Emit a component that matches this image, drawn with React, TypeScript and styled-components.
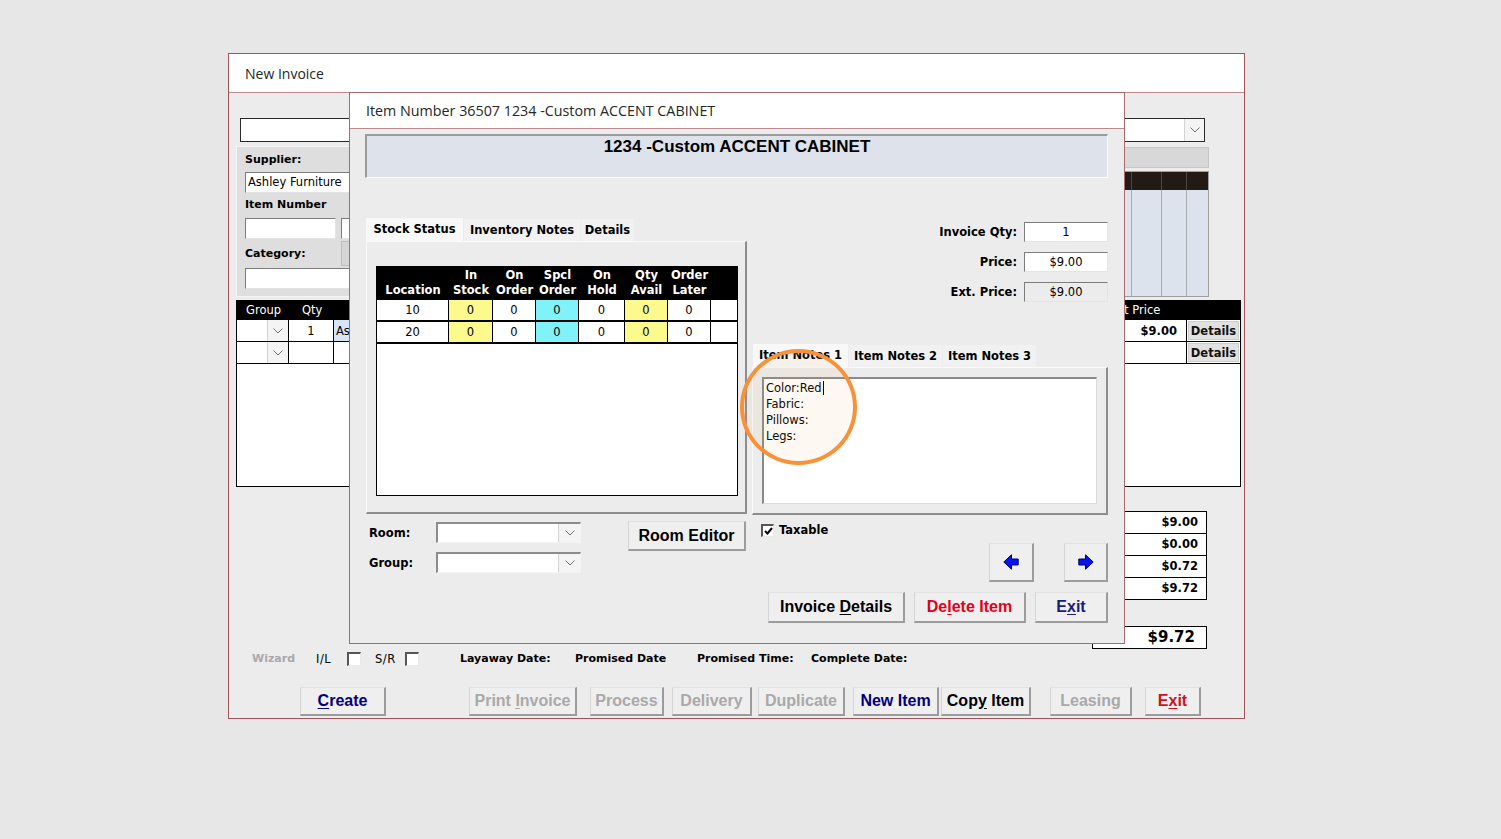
import React from "react";
import styled, { createGlobalStyle } from "styled-components";

const UI = `"DejaVu Sans", Verdana, sans-serif`;
const BTN = `"Liberation Sans", Arial, sans-serif`;
const TITLE = `"Open Sans", "Noto Sans", sans-serif`;

const GlobalStyle = createGlobalStyle`
  * { box-sizing: border-box; }
  html, body { margin: 0; padding: 0; background: #e8e7e7; }
  body { font-family: ${UI}; color: #000; }
`;

const Page = styled.div`
  width: 1501px;
  height: 839px;
  padding: 53px 0 0 228px;
  overflow: hidden;
`;

const MainWindow = styled.div`
  position: relative;
  width: 1017px;
  height: 666px;
  border: 1px solid #a0545a;
  background: #ececec;
  display: flex;
  flex-direction: column;
`;

const WinTitle = styled.div<{ $h: number; $size?: number }>`
  flex: none;
  height: ${(p) => p.$h}px;
  background: #fff;
  border-bottom: 1px solid #b98a8e;
  padding: 0 0 0 16px;
  display: flex;
  align-items: center;
  font: ${(p) => p.$size ?? 14}px ${TITLE};
  color: #262626;
`;

const MainBody = styled.div`
  flex: 1;
  padding: 0 3px 0 7px;
  display: flex;
  flex-direction: column;
`;

const TopRow = styled.div`
  margin-top: 25px;
  display: flex;
  justify-content: space-between;
`;

const LeftCol = styled.div`
  width: 260px;
`;

const RightCol = styled.div`
  width: 200px;
  padding-right: 32px;
  display: flex;
  flex-direction: column;
  align-items: flex-end;
`;

const Label = styled.div<{ $size?: number; $w?: number; $color?: string }>`
  font: bold ${(p) => p.$size ?? 11}px/14px ${UI};
  color: ${(p) => p.$color ?? "#000"};
  white-space: nowrap;
  ${(p) => (p.$w ? `width: ${p.$w}px; flex: none;` : "")}
`;

const Combo = styled.div<{ $w: number; $h?: number; $dark?: boolean }>`
  position: relative;
  width: ${(p) => p.$w}px;
  height: ${(p) => p.$h ?? 21}px;
  background: #fff;
  border-style: solid;
  border-width: ${(p) => (p.$dark ? "1px" : "2px 1px 1px 2px")};
  border-color: ${(p) => (p.$dark ? "#2a2a2a" : "#8c8c8c #f4f4f4 #f4f4f4 #8c8c8c")};
  display: flex;
  justify-content: flex-end;
`;

const DropBtn = styled.div<{ $w?: number }>`
  width: ${(p) => p.$w ?? 21}px;
  height: 100%;
  background: #f4f4f4;
  border-left: 1px solid #d2d2d2;
  display: flex;
  align-items: center;
  justify-content: center;
`;

const Chevron = () => (
  <svg width="10" height="6" viewBox="0 0 10 6">
    <path d="M0.5 0.5 L5 5 L9.5 0.5" fill="none" stroke="#707070" strokeWidth="1" />
  </svg>
);

const SearchPanel = styled.div`
  margin-top: 4px;
  width: 250px;
  height: 151px;
  background: #dedede;
  border: 1px solid #f6f6f6;
  border-right: none;
  padding: 6px 0 0 8px;
`;

const TextBox = styled.div<{ $w: number; $h?: number; $bg?: string; $align?: string; $mt?: number }>`
  flex: none;
  width: ${(p) => p.$w}px;
  height: ${(p) => p.$h ?? 21}px;
  margin-top: ${(p) => p.$mt ?? 0}px;
  background: ${(p) => p.$bg ?? "#fff"};
  border: 1px solid;
  border-color: #7c7c7c #e4e4e4 #e4e4e4 #7c7c7c;
  padding: 0 2px;
  font: 11.5px/${(p) => (p.$h ?? 21) - 2}px ${UI};
  text-align: ${(p) => p.$align ?? "left"};
  white-space: nowrap;
  overflow: hidden;
`;

const PanelRow = styled.div<{ $mt: number; $h?: number }>`
  margin-top: ${(p) => p.$mt}px;
  display: flex;
  align-items: flex-end;
  gap: 5px;
  ${(p) => (p.$h ? `height: ${p.$h}px;` : "")}
`;

const BrowseBox = styled.div`
  width: 40px;
  height: 25px;
  background: #d5d5d5;
  border: 1px solid #bdbdbd;
  margin-left: -5px;
`;

const LabelSpacer = styled.div`
  width: 96px;
  padding-bottom: 5px;
`;

const GreyBar = styled.div`
  margin-top: 5px;
  width: 168px;
  height: 21px;
  background: #d8d8d8;
  border: 1px solid #c6c6c6;
`;

const MiniTable = styled.div`
  margin-top: 3px;
  width: 168px;
  height: 126px;
  border: 1px solid #9e9e9e;
  background: #dce3ec;
  display: grid;
  grid-template-columns: 90px 30px 25px 1fr;
  grid-template-rows: 18px 1fr;
`;

const MiniHead = styled.div<{ $last?: boolean }>`
  background: #221a15;
  border-right: ${(p) => (p.$last ? "none" : "1px solid #4e4540")};
`;

const MiniCol = styled.div<{ $last?: boolean }>`
  border-right: ${(p) => (p.$last ? "none" : "1px solid #a9adb2")};
`;

const GRID_COLS = "52px 45px 1fr 88px 53px";

const LineGrid = styled.div`
  margin-top: 3px;
  height: 187px;
  background: #fff;
  border: 1px solid #000;
`;

const GridHead = styled.div`
  height: 19px;
  background: #000;
  color: #fff;
  display: grid;
  grid-template-columns: ${GRID_COLS};
  font: 11.5px/19px ${UI};
`;

const HeadText = styled.div<{ $pl: number }>`
  padding-left: ${(p) => p.$pl}px;
  white-space: nowrap;
`;

const GridRow = styled.div`
  height: 22px;
  border-bottom: 1px solid #000;
  display: grid;
  grid-template-columns: ${GRID_COLS};
`;

const GCell = styled.div<{ $align?: string; $bg?: string; $bold?: boolean; $noline?: boolean }>`
  display: flex;
  justify-content: ${(p) => p.$align ?? "flex-start"};
  align-items: center;
  padding: 0 ${(p) => (p.$align === "flex-end" ? "9px" : "2px")} 0 2px;
  background: ${(p) => p.$bg ?? "#fff"};
  border-right: ${(p) => (p.$noline ? "none" : "1px solid #000")};
  font: ${(p) => (p.$bold ? "bold " : "")}11.5px ${UI};
  white-space: nowrap;
  overflow: hidden;
`;

const DetailsBtn = styled.div`
  width: 100%;
  height: 100%;
  background: #e1e1e1;
  border: 1px solid #cdcdcd;
  font: bold 11.5px/19px ${UI};
  text-align: center;
  color: #111;
`;

const TotalsCol = styled.div`
  margin-top: 24px;
  padding-right: 34px;
  display: flex;
  flex-direction: column;
  align-items: flex-end;
`;

const SumBox = styled.div<{ $big?: boolean }>`
  width: ${(p) => (p.$big ? 115 : 107)}px;
  height: 23px;
  margin-top: ${(p) => (p.$big ? 26 : -1)}px;
  background: #fff;
  border: 1px solid #000;
  padding-right: ${(p) => (p.$big ? 11 : 8)}px;
  text-align: right;
  font: bold ${(p) => (p.$big ? 15 : 11.5)}px/21px ${UI};
  &:first-child {
    margin-top: 0;
  }
`;

const InfoRow = styled.div`
  margin-top: 2px;
  height: 15px;
  display: flex;
  align-items: center;
`;

const InfoText = styled.div<{ $w: number; $ml?: number }>`
  width: ${(p) => p.$w}px;
  margin-left: ${(p) => p.$ml ?? 0}px;
  flex: none;
  font: 11.5px/14px ${UI};
  letter-spacing: 0.5px;
`;

const CheckBox = styled.div<{ $ml?: number }>`
  flex: none;
  width: 14px;
  height: 14px;
  margin-left: ${(p) => p.$ml ?? 0}px;
  background: #fff;
  border-style: solid;
  border-width: 2px 1px 1px 2px;
  border-color: #555 #e9e9e9 #e9e9e9 #555;
  display: flex;
  align-items: center;
  justify-content: center;
`;

const ButtonRow = styled.div`
  margin-top: 21px;
  display: flex;
`;

const WinButton = styled.button<{ $w: number; $h: number; $ml?: number; $color?: string }>`
  flex: none;
  width: ${(p) => p.$w}px;
  height: ${(p) => p.$h}px;
  margin-left: ${(p) => p.$ml ?? 0}px;
  padding: 0;
  background: #efefef;
  border-style: solid;
  border-width: 1px 2px 2px 1px;
  border-color: #e2e2e2 #9c9c9c #9c9c9c #d4d4d4;
  font: bold 16px ${BTN};
  color: ${(p) => p.$color ?? "#000"};
  display: flex;
  align-items: center;
  justify-content: center;
  white-space: nowrap;
`;

const U = styled.span`
  text-decoration: underline;
  text-underline-offset: 2px;
`;

/* ---------- item dialog ---------- */

const Dialog = styled.div`
  position: absolute;
  left: 120px;
  top: 38px;
  width: 776px;
  height: 552px;
  border: 1px solid #a86a6f;
  background: #ececec;
  display: flex;
  flex-direction: column;
  z-index: 2;
`;

const DialogBody = styled.div`
  flex: 1;
  padding: 5px 16px 0 15px;
  display: flex;
  flex-direction: column;
`;

const HeaderPanel = styled.div`
  height: 44px;
  background: #dee3eb;
  border-style: solid;
  border-width: 2px 1px 1px 2px;
  border-color: #9b9b9b #fbfbfb #fbfbfb #9b9b9b;
  padding-top: 1px;
  text-align: center;
  font: bold 17px/20px ${BTN};
`;

const MainRow = styled.div`
  margin-top: 40px;
  display: flex;
`;

const LeftPane = styled.div`
  width: 382px;
  padding-left: 1px;
`;

const RightPane = styled.div`
  flex: 1;
  margin-left: 5px;
  display: flex;
  flex-direction: column;
`;

const TabStrip = styled.div<{ $ml?: number; $mt?: number; $h?: number }>`
  height: ${(p) => p.$h ?? 23}px;
  margin-left: ${(p) => p.$ml ?? 0}px;
  margin-top: ${(p) => p.$mt ?? 0}px;
  display: flex;
  align-items: flex-end;
`;

const Tab = styled.div<{ $active?: boolean; $w: number }>`
  width: ${(p) => p.$w}px;
  height: ${(p) => (p.$active ? 23 : 22)}px;
  margin-right: 1px;
  background: ${(p) => (p.$active ? "#f8f8f8" : "#f1f1f1")};
  text-align: center;
  font: bold 11.5px/22px ${UI};
  white-space: nowrap;
`;

const TabPanel = styled.div<{ $h: number; $pad: string }>`
  height: ${(p) => p.$h}px;
  padding: ${(p) => p.$pad};
  border-style: solid;
  border-width: 1px 2px 2px 1px;
  border-color: #fafafa #8d8d8d #8d8d8d #fafafa;
`;

const STOCK_COLS = "72px 44px 43px 43px 46px 43px 43px 1fr";

const StockTable = styled.div`
  width: 362px;
  height: 230px;
  background: #fff;
  border: 1px solid #000;
`;

const StockHead = styled.div`
  height: 33px;
  background: #000;
  color: #fff;
  display: grid;
  grid-template-columns: ${STOCK_COLS};
  align-items: end;
  padding-bottom: 2px;
  font: bold 11.5px/15px ${UI};
  text-align: center;
`;

const StockRow = styled.div`
  height: 22px;
  border-bottom: 2px solid #000;
  display: grid;
  grid-template-columns: ${STOCK_COLS};
`;

const StockCell = styled.div<{ $bg?: string; $last?: boolean }>`
  background: ${(p) => p.$bg ?? "#fff"};
  border-right: ${(p) => (p.$last ? "none" : "1px solid #000")};
  text-align: center;
  font: 11.5px/20px ${UI};
`;

const RoomArea = styled.div`
  margin-top: 7px;
  display: flex;
`;

const RoomFields = styled.div`
  padding-top: 1px;
  display: flex;
  flex-direction: column;
  gap: 9px;
`;

const FieldLine = styled.div<{ $gap?: number; $justify?: string }>`
  display: flex;
  align-items: center;
  gap: ${(p) => p.$gap ?? 0}px;
  justify-content: ${(p) => p.$justify ?? "flex-start"};
`;

const RoomLabel = styled(Label)`
  width: 70px;
  padding-left: 3px;
`;

const Fields = styled.div`
  padding-top: 4px;
  display: flex;
  flex-direction: column;
  gap: 10px;
`;

const NotesBox = styled.div`
  width: 335px;
  height: 127px;
  background: #fff;
  border-style: solid;
  border-width: 2px 1px 1px 2px;
  border-color: #8a8a8a #dcdcdc #dcdcdc #8a8a8a;
  padding: 1px 2px;
  font: 11.5px/16px ${UI};
`;

const Caret = styled.span`
  display: inline-block;
  width: 1px;
  height: 14px;
  margin-left: 1px;
  background: #000;
  vertical-align: -3px;
`;

const TaxRow = styled.div`
  margin-top: 8px;
  padding-left: 9px;
  height: 14px;
  display: flex;
  align-items: center;
  gap: 5px;
`;

const ArrowRow = styled.div`
  margin-top: 6px;
  display: flex;
  justify-content: flex-end;
  gap: 30px;
`;

const DlgButtons = styled.div`
  margin-top: 10px;
  display: flex;
  justify-content: flex-end;
  gap: 9px;
`;

const Highlight = styled.div`
  position: absolute;
  left: 390px;
  top: 256px;
  width: 117px;
  height: 116px;
  border: 4px solid #f7923a;
  border-radius: 50%;
  background: rgba(247, 160, 80, 0.07);
  pointer-events: none;
`;

const Arrow = ({ dir }: { dir: "left" | "right" }) => (
  <svg width="16" height="16" viewBox="0 0 16 16">
    <path
      d={
        dir === "left"
          ? "M0.8 8 L8.5 0.8 L8.5 5 L15.2 5 L15.2 11 L8.5 11 L8.5 15.2 Z"
          : "M15.2 8 L7.5 0.8 L7.5 5 L0.8 5 L0.8 11 L7.5 11 L7.5 15.2 Z"
      }
      fill="#0a14ee"
      stroke="#000066"
      strokeWidth="1"
    />
  </svg>
);

const Tick = () => (
  <svg width="9" height="8" viewBox="0 0 9 8">
    <path d="M1 4 L3.5 6.5 L8 1" fill="none" stroke="#000" strokeWidth="2" />
  </svg>
);

const stockHeaders = [
  ["", "Location"],
  ["In", "Stock"],
  ["On", "Order"],
  ["Spcl", "Order"],
  ["On", "Hold"],
  ["Qty", "Avail"],
  ["Order", "Later"],
  ["", ""],
];

const stockRows = [
  ["10", "0", "0", "0", "0", "0", "0", ""],
  ["20", "0", "0", "0", "0", "0", "0", ""],
];

const cellColor = (i: number) => (i === 1 || i === 5 ? "#fcf98d" : i === 3 ? "#80f3fa" : "#fff");

const GREY = "#a9a9a9";

export default function App() {
  return (
    <Page>
      <GlobalStyle />
      <MainWindow>
        <WinTitle $h={39}>New Invoice</WinTitle>
        <MainBody>
          <TopRow>
            <LeftCol>
              <Combo $w={256} $h={24} $dark style={{ marginLeft: 4 }} />
              <SearchPanel>
                <Label>Supplier:</Label>
                <TextBox $w={240} $mt={5}>Ashley Furniture</TextBox>
                <Label style={{ marginTop: 5 }}>Item Number</Label>
                <PanelRow $mt={6}>
                  <TextBox $w={91} />
                  <TextBox $w={80} />
                </PanelRow>
                <PanelRow $mt={2} $h={25}>
                  <LabelSpacer>
                    <Label>Category:</Label>
                  </LabelSpacer>
                  <BrowseBox />
                </PanelRow>
                <TextBox $w={240} $mt={2} />
              </SearchPanel>
            </LeftCol>
            <RightCol>
              <Combo $w={164} $h={24} $dark style={{ marginRight: 4 }}>
                <DropBtn $w={20}>
                  <Chevron />
                </DropBtn>
              </Combo>
              <GreyBar />
              <MiniTable>
                {[0, 1, 2, 3].map((i) => (
                  <MiniHead key={`h${i}`} $last={i === 3} />
                ))}
                {[0, 1, 2, 3].map((i) => (
                  <MiniCol key={`c${i}`} $last={i === 3} />
                ))}
              </MiniTable>
            </RightCol>
          </TopRow>

          <LineGrid>
            <GridHead>
              <HeadText $pl={9}>Group</HeadText>
              <HeadText $pl={13}>Qty</HeadText>
              <HeadText $pl={4}></HeadText>
              <HeadText $pl={11}>Ext Price</HeadText>
              <HeadText $pl={4}></HeadText>
            </GridHead>
            <GridRow>
              <GCell $align="flex-end" style={{ padding: 0 }}>
                <DropBtn>
                  <Chevron />
                </DropBtn>
              </GCell>
              <GCell $align="center">1</GCell>
              <GCell $bg="#d6e5f7">As</GCell>
              <GCell $align="flex-end" $bold>
                $9.00
              </GCell>
              <GCell $noline style={{ padding: 1 }}>
                <DetailsBtn>Details</DetailsBtn>
              </GCell>
            </GridRow>
            <GridRow>
              <GCell $align="flex-end" style={{ padding: 0 }}>
                <DropBtn>
                  <Chevron />
                </DropBtn>
              </GCell>
              <GCell />
              <GCell />
              <GCell />
              <GCell $noline style={{ padding: 1 }}>
                <DetailsBtn>Details</DetailsBtn>
              </GCell>
            </GridRow>
          </LineGrid>

          <TotalsCol>
            <SumBox>$9.00</SumBox>
            <SumBox>$0.00</SumBox>
            <SumBox>$0.72</SumBox>
            <SumBox>$9.72</SumBox>
            <SumBox $big>$9.72</SumBox>
          </TotalsCol>

          <InfoRow>
            <Label $w={64} $color={GREY} style={{ marginLeft: 16 }}>
              Wizard
            </Label>
            <InfoText $w={31}>I/L</InfoText>
            <CheckBox />
            <InfoText $w={30} $ml={14}>
              S/R
            </InfoText>
            <CheckBox />
            <Label $w={115} style={{ marginLeft: 41 }}>
              Layaway Date:
            </Label>
            <Label $w={122}>Promised Date</Label>
            <Label $w={114}>Promised Time:</Label>
            <Label>Complete Date:</Label>
          </InfoRow>

          <ButtonRow>
            <WinButton $w={86} $h={29} $ml={64} $color="#000080">
              <U>C</U>reate
            </WinButton>
            <WinButton $w={108} $h={29} $ml={83} $color={GREY}>
              Print&nbsp;<U>I</U>nvoice
            </WinButton>
            <WinButton $w={74} $h={29} $ml={13} $color={GREY}>
              Process
            </WinButton>
            <WinButton $w={80} $h={29} $ml={8} $color={GREY}>
              Delivery
            </WinButton>
            <WinButton $w={87} $h={29} $ml={6} $color={GREY}>
              Duplicate
            </WinButton>
            <WinButton $w={86} $h={29} $ml={8} $color="#000080">
              New Item
            </WinButton>
            <WinButton $w={90} $h={29} $ml={2}>
              Cop<U>y</U>&nbsp;Item
            </WinButton>
            <WinButton $w={82} $h={29} $ml={19} $color={GREY}>
              Leasing
            </WinButton>
            <WinButton $w={56} $h={29} $ml={13} $color="#d0101c">
              E<U>x</U>it
            </WinButton>
          </ButtonRow>
        </MainBody>

        <Dialog>
          <WinTitle $h={36} $size={14.3}>
            Item Number 36507 1234 -Custom ACCENT CABINET
          </WinTitle>
          <DialogBody>
            <HeaderPanel>1234 -Custom ACCENT CABINET</HeaderPanel>
            <MainRow>
              <LeftPane>
                <TabStrip>
                  <Tab $active $w={97}>Stock Status</Tab>
                  <Tab $w={116}>Inventory Notes</Tab>
                  <Tab $w={53}>Details</Tab>
                </TabStrip>
                <TabPanel $h={273} $pad="24px 7px 0 9px">
                  <StockTable>
                    <StockHead>
                      {stockHeaders.map(([a, b], i) => (
                        <div key={i}>
                          {a}
                          {a && <br />}
                          {b}
                        </div>
                      ))}
                    </StockHead>
                    {stockRows.map((row, r) => (
                      <StockRow key={r}>
                        {row.map((v, i) => (
                          <StockCell key={i} $bg={cellColor(i)} $last={i === row.length - 1}>
                            {v}
                          </StockCell>
                        ))}
                      </StockRow>
                    ))}
                  </StockTable>
                </TabPanel>
                <RoomArea>
                  <RoomFields>
                    <FieldLine>
                      <RoomLabel $size={11.5}>Room:</RoomLabel>
                      <Combo $w={145}>
                        <DropBtn $w={22}>
                          <Chevron />
                        </DropBtn>
                      </Combo>
                    </FieldLine>
                    <FieldLine>
                      <RoomLabel $size={11.5}>Group:</RoomLabel>
                      <Combo $w={145}>
                        <DropBtn $w={22}>
                          <Chevron />
                        </DropBtn>
                      </Combo>
                    </FieldLine>
                  </RoomFields>
                  <WinButton $w={118} $h={30} style={{ marginLeft: "auto", marginRight: 1 }}>
                    Room Editor
                  </WinButton>
                </RoomArea>
              </LeftPane>

              <RightPane>
                <Fields>
                  <FieldLine $gap={7} $justify="flex-end">
                    <Label $size={11.5}>Invoice Qty:</Label>
                    <TextBox $w={84} $h={20} $align="center">
                      1
                    </TextBox>
                  </FieldLine>
                  <FieldLine $gap={7} $justify="flex-end">
                    <Label $size={11.5}>Price:</Label>
                    <TextBox $w={84} $h={20} $align="center">
                      $9.00
                    </TextBox>
                  </FieldLine>
                  <FieldLine $gap={7} $justify="flex-end">
                    <Label $size={11.5}>Ext. Price:</Label>
                    <TextBox $w={84} $h={20} $align="center" $bg="#ececec">
                      $9.00
                    </TextBox>
                  </FieldLine>
                </Fields>
                <TabStrip $ml={1} $mt={41} $h={24}>
                  <Tab $active $w={95}>Item Notes 1</Tab>
                  <Tab $w={93}>Item Notes 2</Tab>
                  <Tab $w={93}>Item Notes 3</Tab>
                </TabStrip>
                <TabPanel $h={148} $pad="9px 9px 0 9px">
                  <NotesBox>
                    Color:Red
                    <Caret />
                    <br />
                    Fabric:
                    <br />
                    Pillows:
                    <br />
                    Legs:
                  </NotesBox>
                </TabPanel>
                <TaxRow>
                  <CheckBox style={{ width: 13, height: 13 }}>
                    <Tick />
                  </CheckBox>
                  <Label $size={11.5}>Taxable</Label>
                </TaxRow>
                <ArrowRow>
                  <WinButton $w={45} $h={39}>
                    <Arrow dir="left" />
                  </WinButton>
                  <WinButton $w={44} $h={39}>
                    <Arrow dir="right" />
                  </WinButton>
                </ArrowRow>
                <DlgButtons>
                  <WinButton $w={137} $h={31}>
                    Invoice&nbsp;<U>D</U>etails
                  </WinButton>
                  <WinButton $w={112} $h={31} $color="#e3001b">
                    De<U>l</U>ete Item
                  </WinButton>
                  <WinButton $w={73} $h={31} $color="#1b1b7c">
                    E<U>x</U>it
                  </WinButton>
                </DlgButtons>
              </RightPane>
            </MainRow>
          </DialogBody>
          <Highlight />
        </Dialog>
      </MainWindow>
    </Page>
  );
}
